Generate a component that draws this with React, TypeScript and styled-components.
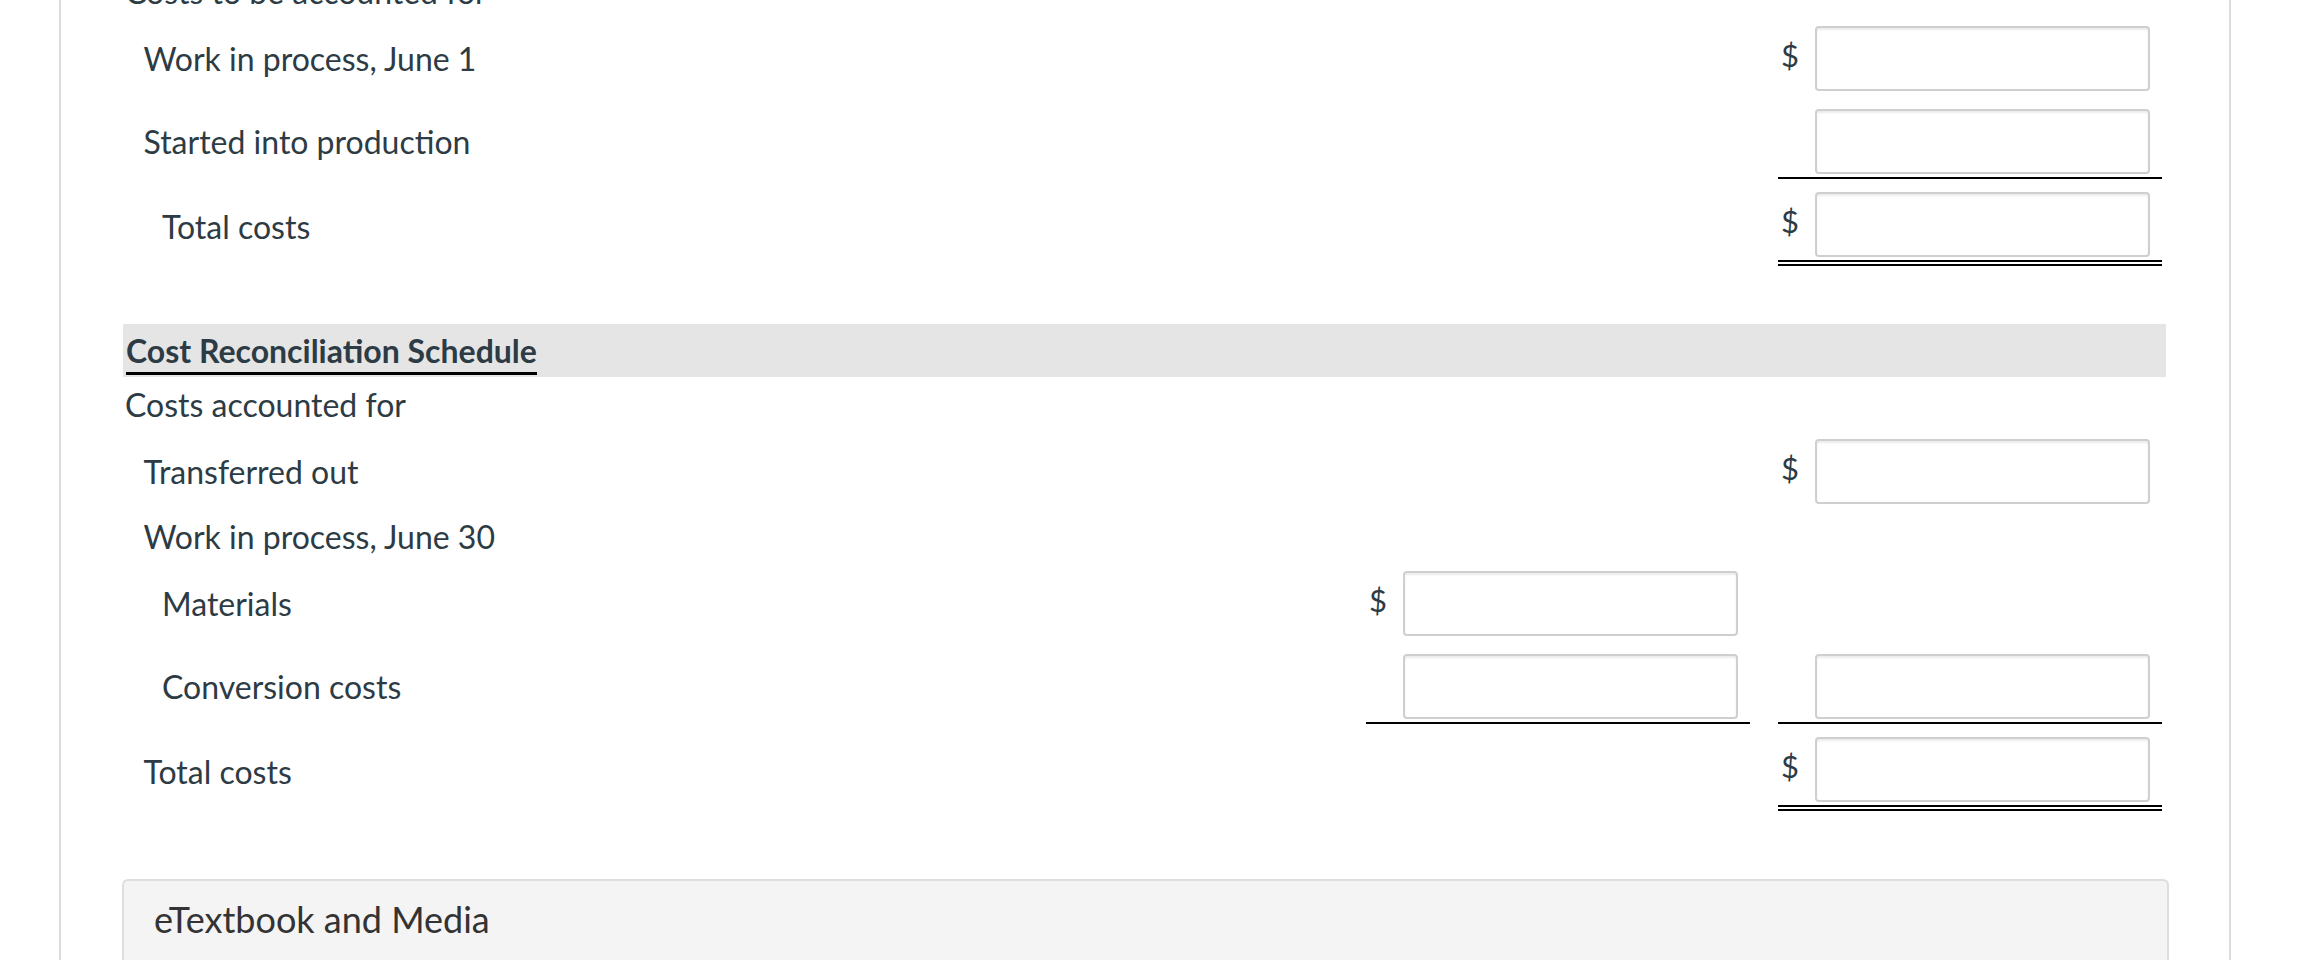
import styled, { createGlobalStyle } from "styled-components";

const GlobalStyle = createGlobalStyle`
  html, body {
    margin: 0;
    padding: 0;
    background: #fff;
  }
  body {
    font-family: Lato, "Open Sans", sans-serif;
    color: #2d3b45;
    overflow: hidden;
  }
`;

type Rule = "none" | "single" | "double";

const Page = styled.div`
  height: 960px;
  overflow: hidden;
`;

const Panel = styled.div`
  box-sizing: border-box;
  margin-left: 59px;
  width: 2172px;
  min-height: 960px;
  border-left: 2px solid #dcdcdc;
  border-right: 2px solid #dcdcdc;
  padding: 0 63px 0 62px;
`;

// the page is scrolled a little: the first heading sits above the top edge
const Schedule = styled.div`
  margin-top: -36px;
`;

const Section = styled.div``;

const TextRow = styled.div<{ $level: number }>`
  padding: 6px 0 0 ${(p) => 2 + p.$level * 18.5}px;
  font-size: 32px;
  line-height: 43px;
`;

const Row = styled.div`
  display: grid;
  grid-template-columns: 1fr 384px 384px;
  column-gap: 28px;
  padding-right: 4px;
`;

const Label = styled.div<{ $level: number }>`
  display: flex;
  align-items: center;
  padding: 13px 0 5px ${(p) => 2 + p.$level * 18.5}px;
  font-size: 32px;
  line-height: 42px;
`;

const AmountCell = styled.div<{ $rule: Rule }>`
  display: flex;
  align-items: center;
  padding: 13px 12px 3px 3px;
  border-bottom: ${(p) =>
    p.$rule === "double"
      ? "6px double #000"
      : p.$rule === "single"
      ? "2px solid #000"
      : "2px solid transparent"};
`;

const EmptyCell = styled.div``;

const Dollar = styled.span<{ $shown: boolean }>`
  width: 34px;
  flex: none;
  margin-bottom: 7px;
  font-size: 31px;
  line-height: 1;
  visibility: ${(p) => (p.$shown ? "visible" : "hidden")};
`;

const AmountInput = styled.input`
  box-sizing: border-box;
  flex: none;
  width: 335px;
  height: 65px;
  margin: 0;
  border: 2px solid #cfcfcf;
  border-radius: 4px;
  background: #fff;
  box-shadow: inset 0 2px 2px rgba(0, 0, 0, 0.075);
  font: inherit;
  font-size: 28px;
  padding: 0 12px;
`;

const SectionBar = styled.div`
  display: flex;
  align-items: flex-start;
  margin-top: 58px;
  padding: 6px 3px 3px;
  background: #e5e5e5;
`;

const SectionTitle = styled.span`
  font-weight: 700;
  font-size: 32px;
  line-height: 42px;
  border-bottom: 3px solid #000;
  margin-bottom: -1px;
`;

const MediaPanel = styled.div`
  margin: 68px -3px 0 -1px;
  padding: 11px 30px 40px;
  background: #f4f4f4;
  border: 2px solid #dedede;
  border-bottom: none;
  border-radius: 6px 6px 0 0;
  font-size: 36px;
  line-height: 1.5;
  color: #333;
`;

interface Amount {
  dollar?: boolean;
  rule?: Rule;
}

interface LineProps {
  label: string;
  level: number;
  middle?: Amount;
  right?: Amount;
}

function Amt({ amount }: { amount?: Amount }) {
  if (!amount) return <EmptyCell />;
  return (
    <AmountCell $rule={amount.rule ?? "none"}>
      <Dollar $shown={!!amount.dollar}>$</Dollar>
      <AmountInput type="text" aria-label="amount" />
    </AmountCell>
  );
}

function Line(props: LineProps) {
  return (
    <Row>
      <Label $level={props.level}>{props.label}</Label>
      <Amt amount={props.middle} />
      <Amt amount={props.right} />
    </Row>
  );
}

export default function App() {
  return (
    <Page>
      <GlobalStyle />
      <Panel>
        <Schedule>
          <Section>
            <TextRow $level={0}>Costs to be accounted for</TextRow>
            <Line label="Work in process, June 1" level={1} right={{ dollar: true }} />
            <Line label="Started into production" level={1} right={{ rule: "single" }} />
            <Line label="Total costs" level={2} right={{ dollar: true, rule: "double" }} />
          </Section>

          <SectionBar>
            <SectionTitle>Cost Reconciliation Schedule</SectionTitle>
          </SectionBar>

          <Section>
            <TextRow $level={0}>Costs accounted for</TextRow>
            <Line label="Transferred out" level={1} right={{ dollar: true }} />
            <TextRow $level={1}>Work in process, June 30</TextRow>
            <Line label="Materials" level={2} middle={{ dollar: true }} />
            <Line
              label="Conversion costs"
              level={2}
              middle={{ rule: "single" }}
              right={{ rule: "single" }}
            />
            <Line label="Total costs" level={1} right={{ dollar: true, rule: "double" }} />
          </Section>

          <MediaPanel>eTextbook and Media</MediaPanel>
        </Schedule>
      </Panel>
    </Page>
  );
}
